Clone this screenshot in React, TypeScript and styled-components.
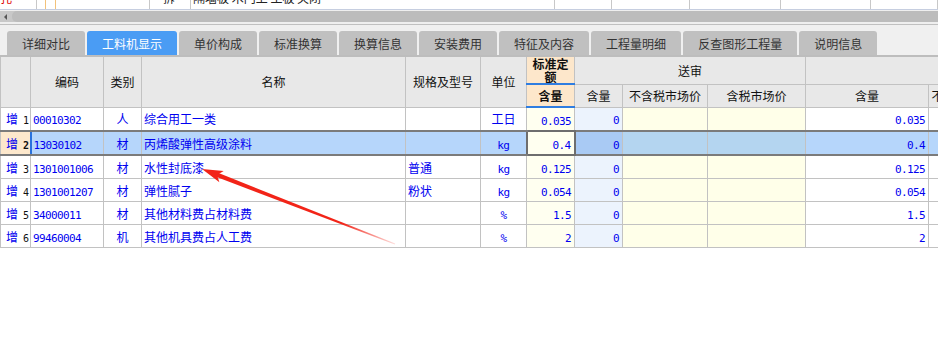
import React from "react";
import styled, { createGlobalStyle, css } from "styled-components";

const Global = createGlobalStyle`
  html, body { margin: 0; padding: 0; background: #fff; }
  body { font-family: "Noto Sans CJK SC", "Liberation Sans", sans-serif; font-size: 12px; }
`;

const Page = styled.div`
  position: relative;
  width: 938px;
  height: 339px;
  overflow: hidden;
  background: #fff;
  display: flex;
  flex-direction: column;
`;

/* ---------- partial row at top ---------- */
const TopStrip = styled.div`
  display: flex;
  flex: none;
  height: 9px;
  border-bottom: 1px solid #c6cee0;
  background: #fff;
  overflow: hidden;
`;
const StripCell = styled.div<{ $w?: number; $line?: string }>`
  box-sizing: border-box;
  flex: ${(p) => (p.$w ? `0 0 ${p.$w}px` : "1 1 auto")};
  height: 9px;
  border-right: 1px solid ${(p) => p.$line || "#c8c8c8"};
  overflow: hidden;
  display: flex;
  align-items: flex-start;
`;
const StripText = styled.span<{ $red?: boolean; $pl?: number }>`
  margin-top: -10px;
  padding-left: ${(p) => p.$pl ?? 0}px;
  line-height: 16px;
  font-size: 12px;
  white-space: nowrap;
  color: ${(p) => (p.$red ? "#e00000" : "#222")};
`;

/* ---------- scroll bar ---------- */
const ScrollArea = styled.div`
  flex: none;
  padding: 1px 0 2px;
  background: #efefef;
  border-bottom: 1px solid #c0c0c0;
`;
const Track = styled.div`
  height: 11px;
  background: #c8c8c8;
  display: flex;
  align-items: center;
  gap: 5px;
  padding-left: 4px;
`;
const Arrow = styled.div`
  width: 0;
  height: 0;
  border-top: 3px solid transparent;
  border-bottom: 3px solid transparent;
  border-right: 3px solid #555;
`;
const Thumb = styled.div`
  flex: 1;
  height: 11px;
  background: #bcbcbc;
  border-radius: 5px 0 0 5px;
`;

/* ---------- tabs ---------- */
const TabBar = styled.div`
  flex: none;
  height: 30px;
  box-sizing: border-box;
  padding: 6px 0 0 7px;
  background: #f0f0f0;
  display: flex;
  align-items: flex-end;
  gap: 2px;
`;
const Tab = styled.div<{ $active?: boolean }>`
  height: 24px;
  padding: 0 15px;
  display: flex;
  align-items: center;
  border-radius: 3px 3px 0 0;
  font-size: 12px;
  white-space: nowrap;
  background: ${(p) => (p.$active ? "#4a9cf4" : "#c0c0c0")};
  color: ${(p) => (p.$active ? "#fff" : "#333")};
`;

/* ---------- grid ---------- */
const GridWrap = styled.div`
  flex: none;
  overflow: hidden;
`;
const Grid = styled.table`
  border-collapse: collapse;
  table-layout: fixed;
  width: 1006px;
  border-top: 2px solid #bdbdbd;
  font-size: 12px;
`;
const HRow = styled.tr<{ $h: number }>`
  height: ${(p) => p.$h}px;
`;
const HCell = styled.th<{ $std?: boolean }>`
  padding: 0;
  border: 1px solid #c2c2c2;
  background: ${(p) => (p.$std ? "#fde7cb" : "#e8e8e8")};
  color: #111;
  font-weight: ${(p) => (p.$std ? 700 : 400)};
  line-height: 13px;
  text-align: center;
  vertical-align: middle;
  white-space: ${(p) => (p.$std ? "normal" : "nowrap")};
  overflow: hidden;
  ${(p) =>
    p.$std &&
    css`
      border-bottom: 2px solid #2f7de1;
      padding: 0 4px;
    `}
`;

type Kind = "num" | "code" | "type" | "name" | "spec" | "unit" | "std" | "rev" | "price" | "qty" | "extra";

const normalBg: Record<Kind, string> = {
  num: "#fff",
  code: "#fff",
  type: "#fff",
  name: "#fff",
  spec: "#fff",
  unit: "#fff",
  std: "#fffff0",
  rev: "#ecf3fd",
  price: "#ffffe9",
  qty: "#fff",
  extra: "#fff",
};
const selBg: Record<Kind, string> = {
  num: "#fde8cc",
  code: "#b6d6fb",
  type: "#b6d6fb",
  name: "#b6d6fb",
  spec: "#b6d6fb",
  unit: "#b6d6fb",
  std: "#fffff0",
  rev: "#a9caf4",
  price: "#b4d5f0",
  qty: "#b6d6fb",
  extra: "#b6d6fb",
};
const align: Record<Kind, string> = {
  num: "left",
  code: "left",
  type: "center",
  name: "left",
  spec: "left",
  unit: "center",
  std: "right",
  rev: "right",
  price: "right",
  qty: "right",
  extra: "right",
};

const DRow = styled.tr`
  height: 23px;
`;
const DCell = styled.td<{ $kind: Kind; $sel?: boolean }>`
  padding: 0 ${(p) => (align[p.$kind] === "right" ? 3 : p.$kind === "num" ? 0 : 2)}px 0
    ${(p) => (p.$kind === "num" ? 5 : 2)}px;
  height: 22px;
  border: 1px solid #c2c2c2;
  background: ${(p) => (p.$sel ? selBg[p.$kind] : normalBg[p.$kind])};
  color: #0000f0;
  text-align: ${(p) => align[p.$kind]};
  vertical-align: middle;
  white-space: nowrap;
  overflow: hidden;
  ${(p) =>
    p.$sel &&
    css`
      border-top: 2px solid #7b7b7b;
      border-bottom: 2px solid #7b7b7b;
    `}
  ${(p) =>
    p.$sel &&
    p.$kind === "code" &&
    css`
      border-left: 2px solid #2a72dd;
    `}
  ${(p) =>
    p.$sel &&
    p.$kind === "std" &&
    css`
      border: 2px solid #6e6e6e;
    `}
`;
const Mono = styled.span`
  font-family: "DejaVu Sans Mono", "Liberation Mono", monospace;
  font-size: 11px;
  letter-spacing: -0.62px;
`;
const RowNo = styled.span<{ $bold?: boolean }>`
  display: inline-block;
  margin-left: 5px;
  color: #111;
  font-family: "DejaVu Sans Mono", "Liberation Mono", monospace;
  font-size: 10px;
  font-weight: ${(p) => (p.$bold ? 700 : 400)};
`;

const Empty = styled.div`
  flex: 1;
`;

const ArrowSvg = styled.svg`
  position: absolute;
  left: 0;
  top: 0;
  pointer-events: none;
`;

type Row = {
  n: number;
  code: string;
  type: string;
  name: string;
  spec: string;
  unit: string;
  unitMono: boolean;
  std: string;
  rev: string;
  qty: string;
  sel?: boolean;
};

const rows: Row[] = [
  { n: 1, code: "00010302", type: "人", name: "综合用工一类", spec: "", unit: "工日", unitMono: false, std: "0.035", rev: "0", qty: "0.035" },
  { n: 2, code: "13030102", type: "材", name: "丙烯酸弹性高级涂料", spec: "", unit: "kg", unitMono: true, std: "0.4", rev: "0", qty: "0.4", sel: true },
  { n: 3, code: "1301001006", type: "材", name: "水性封底漆", spec: "普通", unit: "kg", unitMono: true, std: "0.125", rev: "0", qty: "0.125" },
  { n: 4, code: "1301001207", type: "材", name: "弹性腻子", spec: "粉状", unit: "kg", unitMono: true, std: "0.054", rev: "0", qty: "0.054" },
  { n: 5, code: "34000011", type: "材", name: "其他材料费占材料费", spec: "", unit: "%", unitMono: true, std: "1.5", rev: "0", qty: "1.5" },
  { n: 6, code: "99460004", type: "机", name: "其他机具费占人工费", spec: "", unit: "%", unitMono: true, std: "2", rev: "0", qty: "2" },
];

const tabs = ["详细对比", "工料机显示", "单价构成", "标准换算", "换算信息", "安装费用", "特征及内容", "工程量明细", "反查图形工程量", "说明信息"];
const colWidths = [30, 73, 38, 264, 75, 46, 48, 48, 85, 98, 123, 78];

export default function App() {
  return (
    <>
      <Global />
      <Page>
        <TopStrip>
          <StripCell $w={37}>
            <StripText $red $pl={0}>孔</StripText>
          </StripCell>
          <StripCell $w={9} $line="#f3c27a" />
          <StripCell $w={10} $line="#f3c27a" />
          <StripCell $w={94} />
          <StripCell $w={41}>
            <StripText $pl={13}>拆</StripText>
          </StripCell>
          <StripCell $w={364}>
            <StripText $pl={2}>隔墙板 木门上 工板 关闭</StripText>
          </StripCell>
          <StripCell $w={57} />
          <StripCell $w={78} />
          <StripCell $w={91} />
          <StripCell $w={90} />
          <StripCell />
        </TopStrip>

        <ScrollArea>
          <Track>
            <Arrow />
            <Thumb />
          </Track>
        </ScrollArea>

        <TabBar>
          {tabs.map((t, i) => (
            <Tab key={t} $active={i === 1}>
              {t}
            </Tab>
          ))}
        </TabBar>

        <GridWrap>
          <Grid>
            <colgroup>
              {colWidths.map((w, i) => (
                <col key={i} style={{ width: w }} />
              ))}
            </colgroup>
            <thead>
              <HRow $h={28}>
                <HCell rowSpan={2} />
                <HCell rowSpan={2}>编码</HCell>
                <HCell rowSpan={2}>类别</HCell>
                <HCell rowSpan={2}>名称</HCell>
                <HCell rowSpan={2}>规格及型号</HCell>
                <HCell rowSpan={2}>单位</HCell>
                <HCell $std>标准定额</HCell>
                <HCell colSpan={3}>送审</HCell>
                <HCell colSpan={2} />
              </HRow>
              <HRow $h={23}>
                <HCell $std>含量</HCell>
                <HCell>含量</HCell>
                <HCell>不含税市场价</HCell>
                <HCell>含税市场价</HCell>
                <HCell>含量</HCell>
                <HCell>不含税市场价</HCell>
              </HRow>
            </thead>
            <tbody>
              {rows.map((r) => (
                <DRow key={r.n}>
                  <DCell $kind="num" $sel={r.sel}>
                    增<RowNo $bold={r.sel}>{r.n}</RowNo>
                  </DCell>
                  <DCell $kind="code" $sel={r.sel}>
                    <Mono>{r.code}</Mono>
                  </DCell>
                  <DCell $kind="type" $sel={r.sel}>{r.type}</DCell>
                  <DCell $kind="name" $sel={r.sel}>{r.name}</DCell>
                  <DCell $kind="spec" $sel={r.sel}>{r.spec}</DCell>
                  <DCell $kind="unit" $sel={r.sel}>
                    {r.unitMono ? <Mono>{r.unit}</Mono> : r.unit}
                  </DCell>
                  <DCell $kind="std" $sel={r.sel}>
                    <Mono>{r.std}</Mono>
                  </DCell>
                  <DCell $kind="rev" $sel={r.sel}>
                    <Mono>{r.rev}</Mono>
                  </DCell>
                  <DCell $kind="price" $sel={r.sel} />
                  <DCell $kind="price" $sel={r.sel} />
                  <DCell $kind="qty" $sel={r.sel}>
                    <Mono>{r.qty}</Mono>
                  </DCell>
                  <DCell $kind="extra" $sel={r.sel} />
                </DRow>
              ))}
            </tbody>
          </Grid>
        </GridWrap>
        <Empty />

        <ArrowSvg width={938} height={339} viewBox="0 0 938 339">
          <defs>
            <linearGradient id="fade" gradientUnits="userSpaceOnUse" x1="216" y1="174" x2="395" y2="244">
              <stop offset="0" stopColor="#f22418" stopOpacity="1" />
              <stop offset="0.7" stopColor="#f22418" stopOpacity="1" />
              <stop offset="1" stopColor="#f22418" stopOpacity="0.15" />
            </linearGradient>
          </defs>
          <polygon points="215.3,176.5 216.7,172.3 395.2,243.5 394.8,244.5" fill="url(#fade)" />
          <polygon points="202,169 223.7,171 217,175 219.4,182.3" fill="#f22418" />
        </ArrowSvg>
      </Page>
    </>
  );
}
